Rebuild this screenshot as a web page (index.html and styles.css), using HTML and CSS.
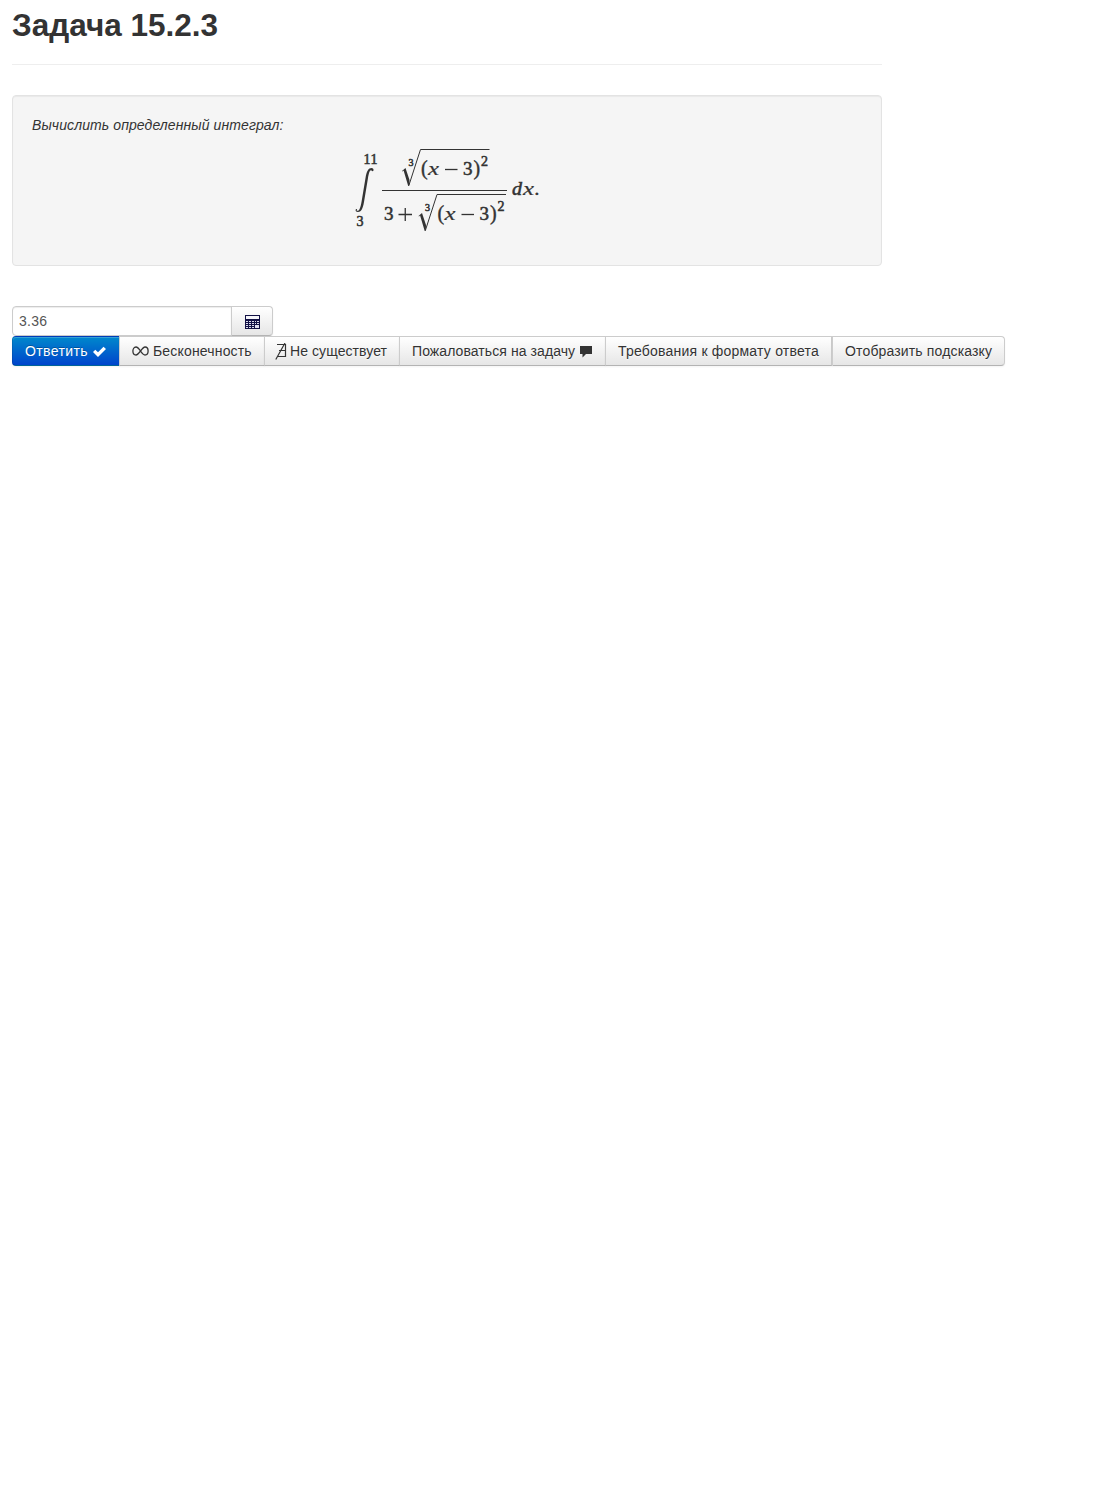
FILE: index.html
```
<!DOCTYPE html>
<html lang="ru">
<head>
<meta charset="utf-8">
<title>Задача 15.2.3</title>
<link rel="stylesheet" href="styles.css">
</head>
<body>
<header class="page-header"><h1>Задача 15.2.3</h1></header>
<section class="well">
  <em>Вычислить определенный интеграл:</em>
  <svg class="formula" width="192" height="88" viewBox="351 146 192 88">
    <path class="ink" d="M356.500 210.500C359 212 360.500 208 361.500 202L365.500 178C366.500 171 368.500 168 371.500 168C373 168 373.800 169 373.500 170.500C373 171.500 372 171.500 371.500 170.500C369.500 169.500 368.800 174 368 178L364 202C362.800 209 361 212 358 212C356 212 355.300 211 355.700 209.500C356.200 208.500 357.300 209 357 210Z"/>
    <text class="small" x="363.500" y="164" textLength="14">11</text>
    <text class="small" x="356.500" y="226" textLength="7">3</text>
    <path class="line bar" d="M382 190.500H507"/>
    <g id="root">
      <path class="line" d="M409 185L420.500 149.500H489.500"/>
      <path class="ink" d="M402 171L405.500 168L409.500 180L409.300 186H408.200L403.600 170.500L402.500 171.500Z"/>
      <text class="index" x="408.500" y="166" textLength="5.500">3</text>
      <text class="paren" x="421" y="175">(</text>
      <text class="var x" x="428" y="175" textLength="11" lengthAdjust="spacingAndGlyphs">x</text>
      <path class="line op" d="M445 169.500H457.500"/>
      <text class="num" x="463" y="175" textLength="9.500" lengthAdjust="spacingAndGlyphs">3</text>
      <text class="paren" x="473.500" y="175">)</text>
      <text class="small" x="481" y="166" textLength="7">2</text>
    </g>
    <use href="#root" x="16.500" y="45"/>
    <text class="num" x="384" y="220" textLength="9.500" lengthAdjust="spacingAndGlyphs">3</text>
    <path class="line op" d="M398.500 214.500H412M405.250 208V221"/>
    <text class="var" x="512" y="195" textLength="10" lengthAdjust="spacingAndGlyphs">d</text>
    <text class="var x" x="523" y="195" textLength="11" lengthAdjust="spacingAndGlyphs">x</text>
    <text class="num" x="534.500" y="195">.</text>
  </svg>
</section>
<form class="answer">
  <div class="row">
    <input class="field" type="text" value="3.36">
    <button class="btn keypad" type="button" aria-label="Калькулятор">
      <svg width="15" height="14" viewBox="0 0 15 14" shape-rendering="crispEdges">
        <path fill="#111044" d="M0 0H15V14H0Z"/>
        <path fill="#f5f5fa" d="M1 1H14V4H1Z"/>
        <path fill="#dcdcee" d="M1 6H3V7H1ZM4 6H6V7H4ZM7 6H9V7H7ZM10 6H11V7H10ZM12 6H14V7H12ZM1 8H3V9H1ZM4 8H6V9H4ZM7 8H9V9H7ZM10 8H11V9H10ZM12 8H14V9H12ZM1 10H3V11H1ZM4 10H6V11H4ZM7 10H9V11H7ZM10 10H14V13H10ZM1 12H3V13H1ZM4 12H6V13H4ZM7 12H9V13H7Z"/>
      </svg>
    </button>
  </div>
  <div class="row actions">
    <button class="btn primary" type="button">Ответить <svg class="check" width="13" height="11" viewBox="0 0 13 11"><path d="M0 6L2.300 3.700L5 6.300L10.500 0.700L13 3.100L5 11Z" fill="#fff"/></svg></button>
    <button class="btn infinite" type="button"><svg class="inf" width="17" height="10" viewBox="0 0 17 10"><path d="M8.500 5C6.500 2 5.500 1 4 1C2 1 .9 3 .9 5S2 9 4 9C7 9 10 1 13 1C15 1 16.100 3 16.100 5S15 9 13 9C11.500 9 10.500 8 8.500 5Z" fill="none" stroke="#333" stroke-width="1.300"/></svg>Бесконечность</button>
    <button class="btn missing" type="button"><svg class="none" width="12" height="17" viewBox="0 0 12 17"><path d="M2 1.500H10.500V13.500H3M4 7.500H10M10 0L.8 16.500" fill="none" stroke="#333" stroke-width="1.200"/></svg>Не существует</button>
    <button class="btn report" type="button">Пожаловаться на задачу <svg class="comment" width="12" height="12" viewBox="0 0 12 12"><path d="M0 0H12V8H6L2.500 11.500V8H0Z" fill="#333"/></svg></button>
    <button class="btn format" type="button">Требования к формату ответа</button>
    <button class="btn hint" type="button">Отобразить подсказку</button>
  </div>
</form>
</body>
</html>
```
FILE: styles.css
```
* { box-sizing: border-box; }
body {
  margin: 0;
  padding: 5px 12px;
  color: #333;
  background: #fff;
  font: 14px/20px "Liberation Sans", Arial, sans-serif;
}
.page-header {
  width: 870px;
  height: 60px;
  margin-bottom: 30px;
  border-bottom: 1px solid #eee;
}
h1 { margin: 0; font-size: 31.5px; line-height: 40px; }
.well {
  width: 870px;
  height: 171px;
  padding: 19px;
  border: 1px solid #e3e3e3;
  border-radius: 4px;
  background: #f5f5f5;
  box-shadow: inset 0 1px 1px rgba(0, 0, 0, .05);
}
.well em { display: block; letter-spacing: .1px; }
.formula { display: block; margin: 11px auto 0; }
.formula text { fill: #333; font-family: "Liberation Serif", serif; stroke: #333; stroke-width: .55px; }
.formula .num { font-size: 19px; }
.formula .var { font-size: 19px; font-style: italic; }
.formula .x { font-size: 18px; stroke-width: .2px; }
.formula .paren { font-size: 20px; stroke-width: .4px; }
.formula .small { font-size: 14px; }
.formula .index { font-size: 10px; }
.ink { fill: #333; }
.line { fill: none; stroke: #333; }
.bar { stroke-width: 1.2px; }
.op { stroke-width: 1.3px; }
.answer { margin-top: 40px; }
.row { display: flex; }
.field {
  width: 220px;
  height: 30px;
  padding: 4px 6px;
  border: 1px solid #ccc;
  border-radius: 4px 0 0 4px;
  outline: 0;
  color: #555;
  font: inherit;
  letter-spacing: .25px;
  box-shadow: inset 0 1px 1px rgba(0, 0, 0, .075);
}
.btn {
  display: flex;
  align-items: center;
  height: 30px;
  margin: 0 0 0 -1px;
  padding: 0 0 0 12px;
  border: 1px solid #ccc;
  border-bottom-color: #b3b3b3;
  background: linear-gradient(#fff, #e6e6e6);
  box-shadow: inset 0 1px 0 rgba(255, 255, 255, .2), 0 1px 2px rgba(0, 0, 0, .05);
  color: #333;
  font: inherit;
  text-shadow: 0 1px 1px rgba(255, 255, 255, .75);
  white-space: nowrap;
}
.keypad { width: 42px; padding: 2px 0 0 13px; border-radius: 0 4px 4px 0; }
.primary {
  width: 108px;
  margin-left: 0;
  border-color: rgba(0, 0, 0, .1) rgba(0, 0, 0, .1) rgba(0, 0, 0, .25);
  border-radius: 4px 0 0 4px;
  background: linear-gradient(#08c, #04c) #04c;
  color: #fff;
  letter-spacing: .38px;
  text-shadow: 0 -1px 0 rgba(0, 0, 0, .25);
}
.infinite { width: 146px; letter-spacing: .17px; }
.missing { width: 136px; padding-left: 10px; letter-spacing: .08px; }
.report { width: 207px; letter-spacing: .08px; }
.format { width: 227px; letter-spacing: .21px; }
.hint { width: 173px; margin-left: 0; border-radius: 0 4px 4px 0; letter-spacing: .15px; }
.check { margin-left: 5px; }
.inf { margin-right: 4px; }
.none { margin-right: 3px; }
.comment { margin: 2px 0 0 5px; }
```
